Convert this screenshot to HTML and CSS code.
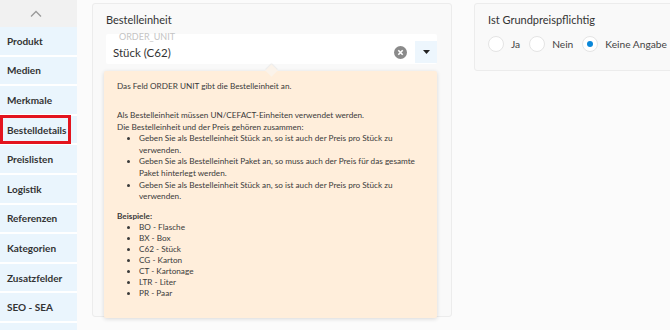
FILE: index.html
```html
<!DOCTYPE html>
<html lang="de">
<head>
    <meta charset="UTF-8">
    <meta name="viewport" content="width=device-width, initial-scale=1.0">
    <title>Bestelldetails</title>
    <link rel="stylesheet" href="styles.css">
</head>
<body>
    <nav class="sidebar">
        <div class="nav-up">
            <svg width="12" height="8" viewBox="0 0 12 8"><path d="M1 6.5 L6 1.5 L11 6.5" fill="none" stroke="#9a9a9a" stroke-width="1.3"/></svg>
        </div>
        <a class="nav-item">Produkt</a>
        <a class="nav-item">Medien</a>
        <a class="nav-item">Merkmale</a>
        <a class="nav-item active">Bestelldetails</a>
        <a class="nav-item">Preislisten</a>
        <a class="nav-item">Logistik</a>
        <a class="nav-item">Referenzen</a>
        <a class="nav-item">Kategorien</a>
        <a class="nav-item">Zusatzfelder</a>
        <a class="nav-item">SEO - SEA</a>
        <a class="nav-item"></a>
    </nav>

    <main class="content">
        <section class="card card-order">
            <h3 class="card-title">Bestelleinheit</h3>
            <div class="select">
                <span class="select-label">ORDER_UNIT</span>
                <span class="select-value">Stück (C62)</span>
                <span class="select-clear">
                    <svg width="13" height="13" viewBox="0 0 13 13"><circle cx="6.5" cy="6.5" r="6.5" fill="#8a8a8a"/><path d="M4.3 4.3 L8.7 8.7 M8.7 4.3 L4.3 8.7" stroke="#fff" stroke-width="1.6"/></svg>
                </span>
                <span class="select-toggle">
                    <svg width="7" height="4" viewBox="0 0 7 4"><path d="M0 0 L7 0 L3.5 4 Z" fill="#222"/></svg>
                </span>
            </div>

            <div class="hint">
                <p class="hint-intro">Das Feld ORDER UNIT gibt die Bestelleinheit an.</p>
                <p>Als Bestelleinheit müssen UN/CEFACT-Einheiten verwendet werden.<br>
                Die Bestelleinheit und der Preis gehören zusammen:</p>
                <ul class="hint-rules">
                    <li>Geben Sie als Bestelleinheit Stück an, so ist auch der Preis pro Stück zu<br>verwenden.</li>
                    <li>Geben Sie als Bestelleinheit Paket an, so muss auch der Preis für das gesamte<br>Paket hinterlegt werden.</li>
                    <li>Geben Sie als Bestelleinheit Stück an, so ist auch der Preis pro Stück zu<br>verwenden.</li>
                </ul>
                <p class="hint-head">Beispiele:</p>
                <ul class="hint-examples">
                    <li>BO - Flasche</li>
                    <li>BX - Box</li>
                    <li>C62 - Stück</li>
                    <li>CG - Karton</li>
                    <li>CT - Kartonage</li>
                    <li>LTR - Liter</li>
                    <li>PR - Paar</li>
                </ul>
            </div>
        </section>

        <section class="card card-price">
            <h3 class="card-title">Ist Grundpreispflichtig</h3>
            <div class="radios">
                <label class="radio"><span class="dot"></span>Ja</label>
                <label class="radio"><span class="dot"></span>Nein</label>
                <label class="radio checked"><span class="dot"></span>Keine Angabe</label>
            </div>
        </section>
    </main>
</body>
</html>
```

FILE: styles.css
```css
body {
    margin: 0;
    font-family: Lato, "Open Sans", sans-serif;
    background-color: #fbfbfb;
    color: #333;
    display: flex;
    height: 330px;
    overflow: hidden;
}
.sidebar {
    width: 77px;
    flex-shrink: 0;
    background: #fff;
    display: flex;
    flex-direction: column;
    overflow: hidden;
}
.nav-up {
    height: 27px;
    flex-shrink: 0;
    background: #f1f1f1;
    display: flex;
    align-items: center;
    justify-content: center;
    padding-right: 6px;
}
.nav-item {
    position: relative;
    height: 27.6px;
    border-bottom: 2px solid #fff;
    background: #eaf5fd;
    display: flex;
    align-items: center;
    padding-left: 7px;
    font-size: 10px;
    font-weight: 700;
    color: #333;
    flex-shrink: 0;
}
.nav-item.active::after {
    content: "";
    position: absolute;
    left: 0;
    top: -1px;
    width: 65px;
    height: 23px;
    border: 3px solid #e3141e;
}
.content {
    flex: 1;
    display: flex;
    align-items: flex-start;
    gap: 22px;
    padding: 3px 0 0 15px;
    background: #fbfbfb;
}
.card {
    background: #f9f9f9;
    border: 1px solid #ececec;
    border-radius: 3px;
    box-sizing: border-box;
    flex-shrink: 0;
}
.card-title {
    margin: 0;
    font-size: 11px;
    font-weight: 400;
    color: #333;
    line-height: 16px;
}
.card-order {
    width: 360px;
    height: 314px;
    padding: 8px 14px 0 13px;
}
.card-price {
    width: 230px;
    height: 68px;
    padding: 8px 13px;
}
.select {
    position: relative;
    margin-top: 6px;
    height: 30px;
    background: #fff;
    border-radius: 2px;
    display: flex;
    align-items: center;
    padding-left: 7px;
    padding-top: 6px;
    box-sizing: border-box;
}
.select-label {
    position: absolute;
    left: 13px;
    top: -3px;
    font-size: 9px;
    color: #c4c4c4;
}
.select-value {
    flex: 1;
    font-size: 11.5px;
    color: #333;
}
.select-clear {
    display: flex;
    margin-right: 8px;
}
.select-toggle {
    width: 22px;
    height: 22px;
    margin-top: 2px;
    background: #edf6fd;
    display: flex;
    align-items: center;
    justify-content: center;
    margin-bottom: 2px;
}
.hint {
    position: relative;
    margin: 7px 0 0 -2px;
    width: 333px;
    height: 247px;
    box-sizing: border-box;
    background: #ffeedb;
    border-radius: 2px;
    box-shadow: 0 1px 4px rgba(0, 0, 0, 0.14);
    padding: 10px 6px 0 13px;
    font-size: 8.2px;
    line-height: 11.6px;
    color: #3a3a3a;
    white-space: nowrap;
}
.hint::before {
    content: "";
    position: absolute;
    left: 163px;
    top: -5px;
    width: 9px;
    height: 9px;
    background: #fbf3ea;
    transform: rotate(45deg);
    box-shadow: -1px -1px 1px rgba(0, 0, 0, 0.05);
}
.hint p {
    margin: 0;
}
.hint .hint-intro {
    margin-bottom: 17.5px;
}
.hint ul {
    margin: 0;
    padding-left: 22px;
}
.hint .hint-head {
    margin-top: 8px;
    font-weight: 700;
    line-height: 11px;
}
.hint .hint-examples {
    line-height: 11px;
}
.radios {
    display: flex;
    align-items: center;
    margin-top: 8px;
    gap: 9px;
}
.radio {
    display: flex;
    align-items: center;
    font-size: 10.2px;
    color: #444;
}
.dot {
    width: 14px;
    height: 14px;
    border-radius: 50%;
    border: 1px solid #e4e4e4;
    background: #fff;
    margin-right: 7px;
    position: relative;
}
.radio.checked .dot::after {
    content: "";
    position: absolute;
    left: 4px;
    top: 4px;
    width: 6px;
    height: 6px;
    border-radius: 50%;
    background: #0a87d9;
}
```
